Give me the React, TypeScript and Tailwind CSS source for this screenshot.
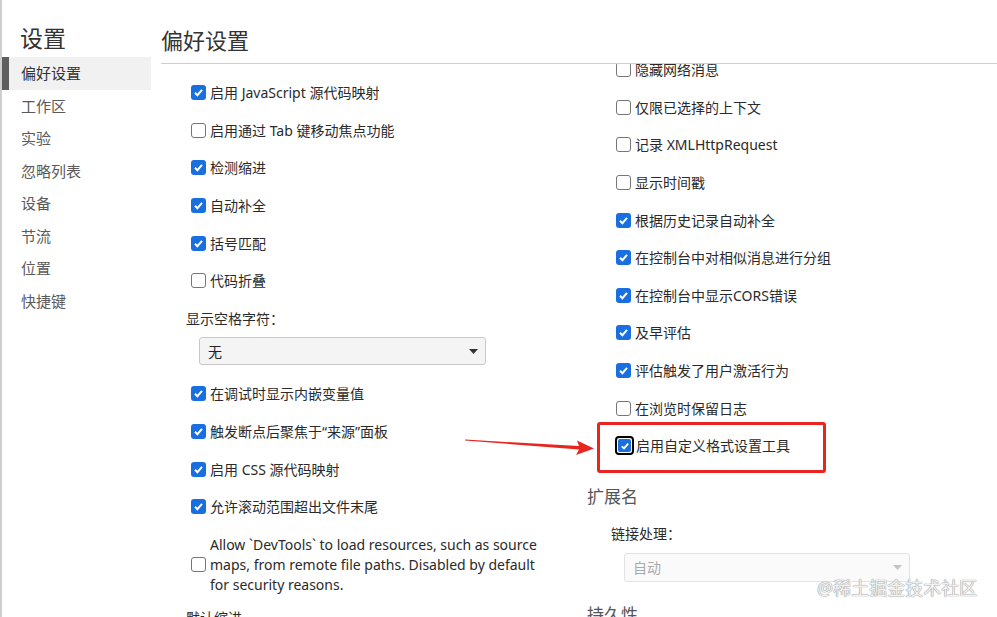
import React from 'react';

const FONT = '"Noto Sans", "Noto Sans CJK SC", sans-serif';

const navItems = ['偏好设置', '工作区', '实验', '忽略列表', '设备', '节流', '位置', '快捷键'];

const leftTop: [string, boolean][] = [
  ['启用 JavaScript 源代码映射', true],
  ['启用通过 Tab 键移动焦点功能', false],
  ['检测缩进', true],
  ['自动补全', true],
  ['括号匹配', true],
  ['代码折叠', false],
];

const leftBottom: [string, boolean][] = [
  ['在调试时显示内嵌变量值', true],
  ['触发断点后聚焦于“来源”面板', true],
  ['启用 CSS 源代码映射', true],
  ['允许滚动范围超出文件末尾', true],
];

const rightItems: [string, boolean][] = [
  ['隐藏网络消息', false],
  ['仅限已选择的上下文', false],
  ['记录 XMLHttpRequest', false],
  ['显示时间戳', false],
  ['根据历史记录自动补全', true],
  ['在控制台中对相似消息进行分组', true],
  ['在控制台中显示CORS错误', true],
  ['及早评估', true],
  ['评估触发了用户激活行为', true],
  ['在浏览时保留日志', false],
];

const Box: React.FC<{ checked: boolean }> = ({ checked }) =>
  checked ? (
    <span className="flex h-[15px] w-[15px] shrink-0 items-center justify-center rounded-[3px] bg-[#1a6fe0]">
      <svg width="11" height="11" viewBox="0 0 11 11">
        <path d="M2 5.8 L4.4 8.2 L9 2.8" fill="none" stroke="white" strokeWidth="2" />
      </svg>
    </span>
  ) : (
    <span className="h-[15px] w-[15px] shrink-0 rounded-[3px] border border-[#767676] bg-white" />
  );

const CheckRow: React.FC<{ label: string; checked: boolean }> = ({ label, checked }) => (
  <div className="flex h-[37.6px] items-center gap-[4px] pl-[30px] text-[14px] text-[#2a2a2a]">
    <Box checked={checked} />
    <span className="whitespace-nowrap">{label}</span>
  </div>
);

const Caret: React.FC<{ color: string }> = ({ color }) => (
  <svg width="9" height="5" viewBox="0 0 9 5">
    <polygon points="0,0 9,0 4.5,5" fill={color} />
  </svg>
);

export default function App() {
  return (
    <div
      className="relative flex h-[617px] w-[997px] overflow-hidden border-l-2 border-[#cfcfcf] bg-white"
      style={{ fontFamily: FONT }}
    >
      {/* sidebar */}
      <aside className="w-[149px] shrink-0">
        <div className="h-[57px] pl-[18px] pt-[22px] text-[23px] leading-[32px] text-[#333]">设置</div>
        <nav className="flex flex-col">
          {navItems.map((item, i) => (
            <div
              key={item}
              className={
                i === 0
                  ? 'flex h-[32.5px] items-center border-l-[7px] border-[#5e5e5e] bg-[#f1f1f1] pl-[12px] text-[15px] text-[#333]'
                  : 'flex h-[32.5px] items-center pl-[19px] text-[15px] text-[#5a5a5a]'
              }
            >
              {item}
            </div>
          ))}
        </nav>
      </aside>

      {/* main */}
      <main className="flex min-w-0 flex-1 flex-col pl-[10px]">
        <header className="h-[64px] shrink-0 border-b border-[#cfcfcf] pt-[25px] text-[22px] leading-[30px] text-[#333]">
          偏好设置
        </header>

        <div className="flex flex-1 overflow-hidden">
          {/* left column */}
          <section className="w-[425px] shrink-0 pt-[10px]">
            {leftTop.map(([l, c]) => (
              <CheckRow key={l} label={l} checked={c} />
            ))}
            <div className="flex h-[37.6px] items-center pl-[25px] text-[14px] text-[#2a2a2a]">显示空格字符：</div>
            <div className="pl-[38px]">
              <div className="flex h-[28px] w-[287px] items-center justify-between rounded-[3px] border border-[#c9c9c9] bg-[#f4f4f4] pl-[8px] pr-[7px] text-[14px] text-[#222]">
                <span>无</span>
                <Caret color="#333" />
              </div>
            </div>
            <div className="mt-[10px]">
              {leftBottom.map(([l, c]) => (
                <CheckRow key={l} label={l} checked={c} />
              ))}
            </div>
            <div className="mt-[9px] flex items-center gap-[4px] pl-[30px] text-[14px] leading-[20px] text-[#2a2a2a]">
              <Box checked={false} />
              <span>
                Allow `DevTools` to load resources, such as source
                <br />
                maps, from remote file paths. Disabled by default
                <br />
                for security reasons.
              </span>
            </div>
            <div className="mt-[13px] pl-[25px] text-[14px] leading-[20px] text-[#2a2a2a]">默认缩进</div>
          </section>

          {/* right column */}
          <section className="w-[411px] shrink-0">
            <div className="-mt-[13px]">
              {rightItems.map(([l, c]) => (
                <CheckRow key={l} label={l} checked={c} />
              ))}
              <div className="flex h-[37.6px] items-center gap-[2px] pl-[29px] text-[14px] text-[#2a2a2a]">
                <span className="flex h-[19px] w-[19px] shrink-0 items-center justify-center rounded-[4px] border-2 border-black bg-white">
                  <span className="flex h-[13px] w-[13px] items-center justify-center rounded-[2px] bg-[#1a6fe0]">
                    <svg width="10" height="10" viewBox="0 0 11 11">
                      <path d="M2 5.8 L4.4 8.2 L9 2.8" fill="none" stroke="white" strokeWidth="2" />
                    </svg>
                  </span>
                </span>
                <span className="whitespace-nowrap">启用自定义格式设置工具</span>
              </div>
            </div>
            <div className="mt-[20px] h-[24px] pl-[1px] text-[17px] leading-[24px] text-[#555]">扩展名</div>
            <div className="mt-[6px] flex h-[37.6px] items-center pl-[25px] text-[14px] text-[#2a2a2a]">链接处理：</div>
            <div className="mt-[1px] pl-[38px]">
              <div className="flex h-[29px] w-[286px] items-center justify-between rounded-[3px] border border-[#e3e3e3] bg-[#fafafa] pl-[8px] pr-[7px] text-[14px] text-[#aaa]">
                <span>自动</span>
                <Caret color="#c4c4c4" />
              </div>
            </div>
            <div className="mt-[21px] pl-[1px] text-[17px] leading-[24px] text-[#555]">持久性</div>
          </section>
        </div>
      </main>

      {/* annotations */}
      <div className="absolute left-[595px] top-[422px] h-[51px] w-[229px] rounded-[3px] border-[3px] border-[#e8261f]" />
      <svg className="absolute left-[460px] top-[430px]" width="140" height="32" viewBox="0 0 140 32">
        <polygon
          points="3,9.6 117,16 115,10.5 132,18.6 114,25 117,19.4 3,10.6"
          fill="#e8261f"
        />
      </svg>
      <div className="absolute left-[815px] top-[575px] text-[18px] leading-[26px] text-[#f2f2f2] [text-shadow:0_0_1px_#8a8a8a,0_0_1px_#8a8a8a]">
        @稀土掘金技术社区
      </div>
    </div>
  );
}
